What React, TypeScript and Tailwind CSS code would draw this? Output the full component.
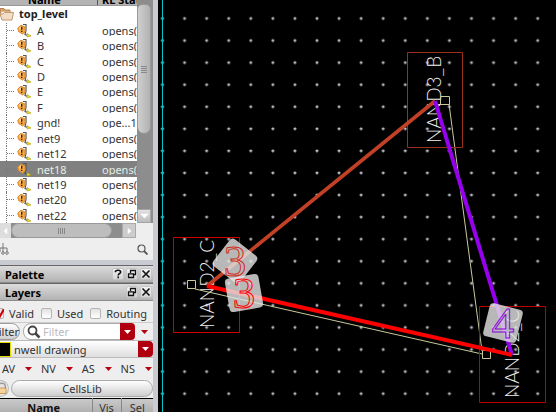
import React from 'react';

const nets: [string, string][] = [
  ['A', 'opens(3)'],
  ['B', 'opens(3)'],
  ['C', 'opens(2)'],
  ['D', 'opens(1)'],
  ['E', 'opens(1)'],
  ['F', 'opens(1)'],
  ['gnd!', 'ope...12'],
  ['net9', 'opens(1)'],
  ['net12', 'opens(1)'],
  ['net18', 'opens(2)'],
  ['net19', 'opens(2)'],
  ['net20', 'opens(2)'],
  ['net22', 'opens(1)'],
];

function NetIcon() {
  return (
    <svg viewBox="0 0 15 15" className="h-[15px] w-[15px] shrink-0" aria-hidden="true">
      <path d="M6 1.500h3v6l-1 4 3 1" fill="none" stroke="#555" strokeWidth="1.200" />
      <path d="M.8 5 4 2.200 8 4v5L5.500 11 1.500 8.500z" fill="#f5a742" stroke="#d98a34" strokeWidth="1" strokeLinejoin="round" />
      <path d="M2 5 4 3.300 5 4 3 7z" fill="#ffd796" />
      <path d="M4 3.800h1.400v3H4zM4 7.700h1.400v1.200H4z" fill="#3a2200" />
      <path d="m10 10.500 4 2.500-4 1z" fill="#f0e020" stroke="#a89b10" strokeWidth=".6" />
    </svg>
  );
}

function FolderIcon() {
  return (
    <svg viewBox="0 0 14 14" className="h-[14px] w-[14px] shrink-0" aria-hidden="true">
      <path d="M0 1.500h4l1 1.500h5v3H0z" fill="#dba26a" stroke="#a8713c" strokeWidth=".8" />
      <path d="M1 4.500h10v5H1z" fill="#fff" stroke="#c9a27c" strokeWidth=".6" />
      <path d="M0 7h3l1.500-1.500h9L12 13H2z" fill="#f2ddc8" stroke="#b8844f" strokeWidth=".8" />
    </svg>
  );
}

function Tri({ className }: { className: string }) {
  return (
    <svg viewBox="0 0 7 4" className={`h-1 w-[7px] shrink-0 ${className}`} aria-hidden="true">
      <path d="M0 0h7L3.500 4z" fill="currentColor" />
    </svg>
  );
}

function TitleButton({ kind }: { kind: 'help' | 'float' | 'close' }) {
  return (
    <button aria-label={kind} className="flex h-3 w-3 items-center justify-center rounded-xs border border-[#c4c4c4] bg-linear-to-b from-[#f4f4f4] to-[#d4d4d4]">
      <svg viewBox="0 0 10 10" className="h-2.5 w-2.5 shrink-0" fill="none" stroke="#111" strokeWidth="1.6" aria-hidden="true">
        {kind === 'help' && <path d="M2.300 3.200C2.300.5 7.700.7 7.700 3c0 1.600-2.500 1.500-2.500 3.400M5.200 7.600v1.600" />}
        {kind === 'float' && <path d="M3.500 4V1.500h5v4H7M1.500 4.800h5v3.700h-5zM3 1.500h6M1 4.800h6" strokeWidth="1.300" />}
        {kind === 'close' && <path d="m1.500 1.500 7 7m0-7-7 7" />}
      </svg>
    </button>
  );
}

function Title({ name, help }: { name: string; help?: boolean }) {
  return (
    <div className="flex h-[18px] items-center gap-0.5 border-y border-t-[#666] border-b-[#8c8c8c] bg-linear-to-b from-[#dcdcdc] to-[#b2b2b2] pr-px pl-[5px]">
      <h2 className="flex-1 text-[11px] leading-none font-bold">{name}</h2>
      {help && <TitleButton kind="help" />}
      <TitleButton kind="float" />
      <TitleButton kind="close" />
    </div>
  );
}

function NetList() {
  return (
    <section className="flex h-[223px] overflow-hidden bg-white text-[11px]">
      <div className="relative min-w-0 flex-1">
        <div className="grid h-[6px] grid-cols-[98px_1fr] overflow-hidden border-b border-[#999] bg-[#b4b4b4] leading-none font-bold">
          <span className="-mt-1.5 border-r border-[#555] pl-7">Name</span>
          <span className="-mt-1.5 overflow-hidden pl-1 whitespace-nowrap">RL Status</span>
        </div>
        <ul className="grid h-[217px] grid-rows-[repeat(14,1fr)]">
          <li className="flex items-center gap-[5px] font-bold text-[#222]">
            <FolderIcon />
            top_level
          </li>
          {nets.map(([name, status]) => (
            <li key={name} className={`grid min-h-0 grid-cols-[102px_1fr] items-center overflow-hidden leading-none whitespace-nowrap ${name === 'net18' ? 'bg-[#808080] text-[#e4eee8]' : 'text-[#333]'}`}>
              <span className="flex h-full items-center">
                <span className="ml-1.5 h-full w-0 border-l border-dotted border-[#777]" />
                <span className="mr-[3px] w-[7px] border-t border-dotted border-[#777]" />
                <NetIcon />
                <span className="ml-[5px]">{name}</span>
              </span>
              <span className="overflow-hidden">{status}</span>
            </li>
          ))}
        </ul>
      </div>
      <div className="flex w-4 flex-col bg-[#8d8d8d]">
        <div className="mt-1 flex h-[130px] w-[14px] flex-col items-center justify-center gap-px rounded-b-lg rounded-t-md border border-[#999] bg-linear-to-r from-[#cfcfcf] to-[#b2b2b2]">
          <i className="h-px w-1.5 bg-[#888]" />
          <i className="h-px w-1.5 bg-[#888]" />
          <i className="h-px w-1.5 bg-[#888]" />
          <i className="h-px w-1.5 bg-[#888]" />
        </div>
        <button aria-label="Scroll down" className="mt-auto flex h-[14px] w-[14px] items-center justify-center border border-[#a4a4a4] bg-linear-to-b from-[#e2e2e2] to-[#bcbcbc] text-white">
          <Tri className="scale-125" />
        </button>
      </div>
    </section>
  );
}

function Check({ label, checked }: { label: string; checked?: boolean }) {
  return (
    <label className="flex items-center gap-[5px]">
      <input type="checkbox" defaultChecked={checked} className="peer sr-only" />
      <span className="flex h-[11px] w-[11px] items-center justify-center rounded-xs border border-[#b5b5b5] bg-linear-to-b from-[#e2e2e2] to-white text-transparent peer-checked:text-[#d00010]">
        <svg viewBox="0 0 10 10" className="h-2.5 w-2.5 shrink-0" aria-hidden="true">
          <path d="m1 5 4 4 5-9" fill="none" stroke="currentColor" strokeWidth="2.200" />
        </svg>
      </span>
      {label}
    </label>
  );
}

function Layers() {
  return (
    <section className="flex flex-col text-[11px] leading-none text-[#333]">
      <div className="flex h-[21px] items-center gap-[7px] pt-1 whitespace-nowrap">
        <div className="-ml-[7px]"><Check label="Valid" checked /></div>
        <Check label="Used" />
        <Check label="Routing" />
      </div>
      <div className="flex h-[18px] items-center border-t border-[#ccc]">
        <button className="-ml-3 h-[17px] w-8 rounded-full border border-[#999] bg-linear-to-b from-white to-[#cfcfcf] pl-1 text-left">Filter</button>
        <label className="ml-[3px] flex h-[17px] min-w-0 flex-1 items-center rounded-lg border border-[#aaa] bg-white pl-[3px]">
          <svg viewBox="0 0 14 14" className="h-3.5 w-3.5 shrink-0" fill="none" stroke="#444" aria-hidden="true">
            <circle cx="5.500" cy="5.500" r="4" strokeWidth="1.800" />
            <path d="m8.500 8.500 4 4" strokeWidth="2.500" />
          </svg>
          <input aria-label="Filter layers" placeholder="Filter" className="ml-0.5 w-full min-w-0 outline-none placeholder:text-[#bbb]" />
        </label>
        <button aria-label="Filter options" className="-ml-3.5 flex h-[17px] w-[15px] items-center justify-center rounded-r-sm bg-[#b00010] text-white"><Tri className="" /></button>
        <button aria-label="More filters" className="flex w-[18px] justify-center text-[#b50010]"><Tri className="" /></button>
      </div>
      <button className="flex h-[18px] items-center border-y border-[#bbb] bg-linear-to-b from-white to-[#dedede] text-left">
        <span className="h-[15px] w-[11px] border border-l-0 border-[#e5dc00] bg-black" />
        <span className="ml-[3px] flex-1">nwell drawing</span>
        <span className="flex h-4 w-[15px] items-center justify-center rounded-r-sm bg-[#b00010] text-white"><Tri className="" /></span>
      </button>
      <div className="flex h-[21px] items-center justify-between pr-px pl-0.5">
        {['AV', 'NV', 'AS', 'NS'].map((name) => (
          <button key={name} className="flex items-center gap-2.5">
            {name}
            <Tri className="text-[#b50010]" />
          </button>
        ))}
      </div>
      <div className="flex h-[18px] items-center gap-0.5">
        <button aria-label="Lock" className="flex h-[17px] w-[9px] items-center justify-end rounded-r-full border border-l-0 border-[#bbb] bg-[#e5e5e5]">
          <svg viewBox="0 0 8 12" className="h-3 w-2 shrink-0" aria-hidden="true">
            <path d="M0 1.500c3-1 5.500 0 5.500 4.500" fill="none" stroke="#999" strokeWidth="1.500" />
            <path d="M-2 6h8v5.500h-8z" fill="#f7d29c" stroke="#c68a3c" strokeWidth=".8" />
          </svg>
        </button>
        <button className="h-[17px] flex-1 rounded-full border border-[#aaa] bg-linear-to-b from-white to-[#cecece]">CellsLib</button>
      </div>
      <table className="mt-px w-full table-fixed border-t border-black bg-linear-to-b from-[#cbcbcb] to-[#a8a8a8]">
        <thead>
          <tr className="h-[18px]">
            <th className="pr-1 text-[#111]">Name</th>
            <th className="w-[29px] border-l border-[#888] font-normal">Vis</th>
            <th className="w-8 border-l border-[#888] font-normal">Sel</th>
          </tr>
        </thead>
      </table>
    </section>
  );
}

const vertical = [
  { name: 'NAND3_B', x: 441, y: 143 },
  { name: 'NAND2_C', x: 214, y: 328 },
  { name: 'NAND2_C', x: 519, y: 398 },
];

const tags = [
  { text: '3', x: 235, y: 261, turn: 38, stroke: '#d02c1c' },
  { text: '3', x: 244, y: 293, turn: -10, stroke: '#ff0000' },
  { text: '4', x: 503, y: 323, turn: 14, stroke: '#8c00dc' },
];

function Canvas() {
  return (
    <main className="relative min-w-0 flex-1 overflow-hidden bg-black">
      <svg className="absolute inset-0 h-full w-full" role="img" aria-label="Net connectivity">
        <defs>
          <pattern id="grid" x="151" y="7" width="22.07" height="22.07" patternUnits="userSpaceOnUse">
            <path d="M10 11.500h3M11.500 10v3" stroke="#d0d0dc" strokeWidth="1.200" />
          </pattern>
        </defs>
        <g transform="translate(-158 0)">
          <rect x="158" width="2000" height="2000" fill="url(#grid)" />
          <path d="M162.500 0v2000" stroke="#00c8c8" />
          <g fill="#f0f0f0" className="font-['Lato'] text-[19px] font-light">
            {vertical.map((v) => (
              <text key={v.x} transform={`translate(${v.x} ${v.y}) rotate(-90)`}>{v.name}</text>
            ))}
          </g>
          <g fill="none" stroke="#c9c99c">
            <path d="M440.500 96.500h9v8h-9zM187.500 280.500h8v8h-8zM482.500 350.500h8v8h-8z" />
            <path d="M449 104 482 351M195 289 482 354" />
          </g>
          <g fill="none">
            <path d="M407.500 52.500h55v95h-55z" stroke="#9c2e1c" />
            <path d="M173.500 237.500h66v95h-66z" stroke="#d00000" />
            <path d="M479.500 306.500h66v96h-66z" stroke="#c00000" />
          </g>
          <path d="M207 286 435 101" stroke="#c24026" strokeWidth="3.600" />
          <path d="M435 101 512 355" stroke="#9600ee" strokeWidth="4" />
          <path d="M207 286 512 355" stroke="#ff0000" strokeWidth="4" />
          {tags.map((t) => (
            <g key={t.y} transform={`translate(${t.x} ${t.y})`}>
              <rect x="-17" y="-17" width="34" height="34" rx="4" fill="#e6e6e6" fillOpacity=".8" transform={`rotate(${t.turn})`} />
              <text textAnchor="middle" y="15" fill="none" stroke={t.stroke} className="font-['Liberation_Serif'] text-[45px]">{t.text}</text>
            </g>
          ))}
        </g>
      </svg>
    </main>
  );
}

export default function App() {
  return (
    <div className="flex h-screen overflow-hidden bg-black font-['Noto_Sans',sans-serif]">
      <aside className="w-[158px] shrink-0 overflow-hidden border-r-[5px] border-[#c9cad2] bg-[#eeeeee]">
        <NetList />
        <div className="flex h-[15px] items-stretch bg-[#8d8d8d]">
          <button aria-label="Scroll left" className="flex w-[11px] items-center justify-center bg-[#ddd] text-white"><Tri className="rotate-90" /></button>
          <div className="flex w-[101px] items-center justify-center gap-px rounded-full border border-[#999] bg-[#bdbdbd]">
            <i className="h-1.5 w-px bg-[#888]" /><i className="h-1.5 w-px bg-[#888]" /><i className="h-1.5 w-px bg-[#888]" /><i className="h-1.5 w-px bg-[#888]" />
          </div>
          <button aria-label="Scroll right" className="ml-auto flex w-3.5 items-center justify-center border border-[#aaa] bg-[#ccc] text-white"><Tri className="-rotate-90" /></button>
          <span className="w-[17px] bg-[#eeeeee]" />
        </div>
        <div className="flex h-[22px] items-center justify-between pr-[5px]">
          <svg viewBox="0 0 9 12" className="h-3 w-[9px]" fill="none" stroke="#777" aria-hidden="true">
            <path d="M3 0v9M0 5h7v4M0 5v4" />
            <circle cx="3" cy="10" r="1.300" /><circle cx="7" cy="10" r="1.300" />
          </svg>
          <button aria-label="Search">
            <svg viewBox="0 0 11 11" className="h-[11px] w-[11px]" fill="none" stroke="#555" aria-hidden="true">
              <circle cx="4.500" cy="4.500" r="3.500" strokeWidth="1.200" /><path d="m7 7 3.500 3.500" strokeWidth="1.800" />
            </svg>
          </button>
        </div>
        <div className="h-[5px] bg-[#c9cad2]" />
        <Title name="Palette" help />
        <Title name="Layers" />
        <Layers />
      </aside>
      <Canvas />
    </div>
  );
}
